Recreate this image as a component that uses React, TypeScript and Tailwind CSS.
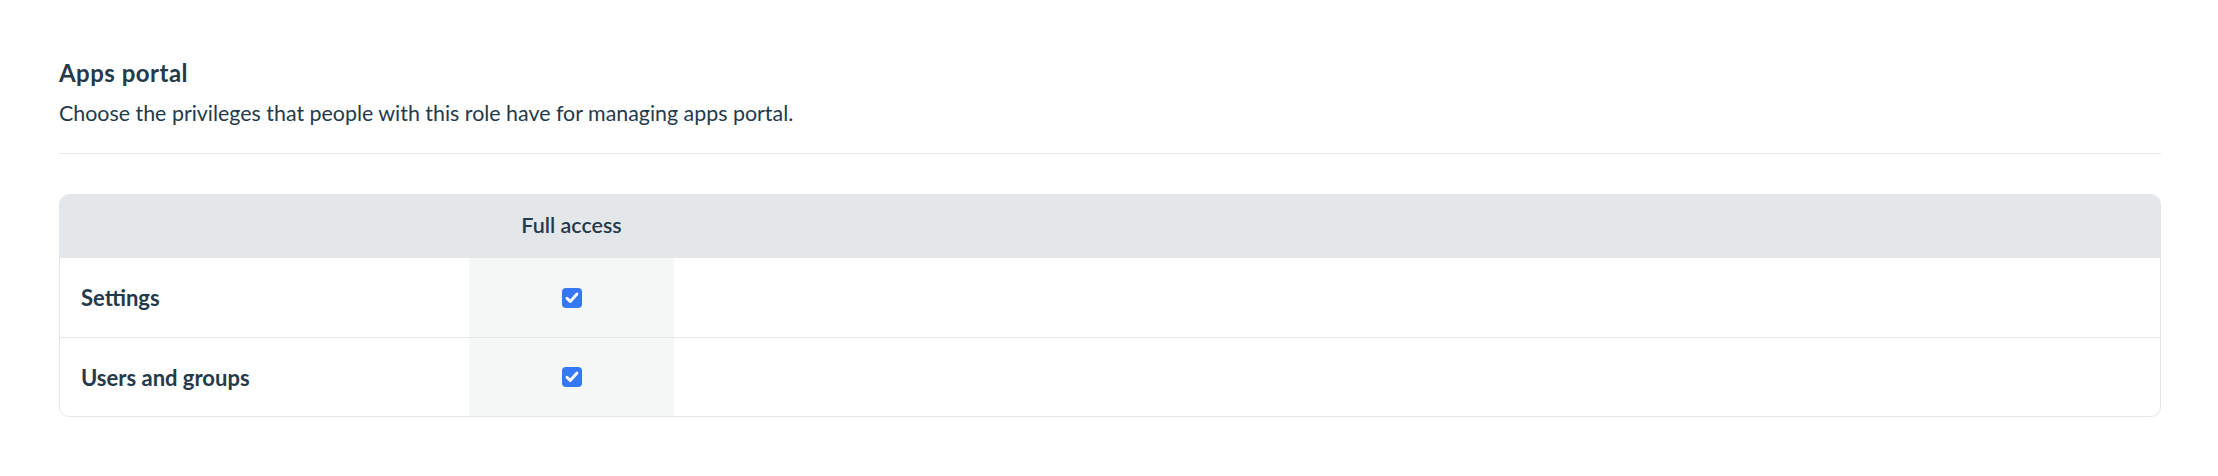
const rows = ["Settings", "Users and groups"];

function CheckIcon() {
  return (
    <span className="flex h-[20px] w-[20px] items-center justify-center rounded-[4px] bg-[#3478f6]">
      <svg width="20" height="20" viewBox="0 0 20 20" fill="none">
        <path
          d="M5 10.3 L8.2 13.5 L15 6"
          stroke="white"
          strokeWidth="2.9"
          strokeLinecap="round"
          strokeLinejoin="round"
        />
      </svg>
    </span>
  );
}

export default function App() {
  return (
    <div className="min-h-[476px] w-full bg-white pl-[59px] pr-[57px] pt-[58px] font-['Lato',sans-serif] text-[#243a4b]">
      {/* Section header */}
      <h2 className="text-[24px] font-bold leading-[30px] tracking-[0.02em]">Apps portal</h2>
      <p className="mt-[11px] text-[21.4px] leading-[28px]">
        Choose the privileges that people with this role have for managing apps portal.
      </p>
      <div className="mt-[26px] border-b border-[#e6e8ea]" />

      {/* Privileges table */}
      <div className="mt-[40px] overflow-hidden rounded-[10px] border border-[#e3e6e9]">
        <div className="grid h-[63px] grid-cols-[409px_205px_1fr] bg-[#e3e7ea]">
          <div />
          <div className="flex items-center justify-center pb-[3px] text-[21.5px] font-semibold">Full access</div>
          <div />
        </div>
        {rows.map((label, i) => (
          <div
            key={label}
            className={`grid h-[79px] grid-cols-[409px_205px_1fr] ${i > 0 ? "border-t border-[#e6e8ea]" : ""}`}
          >
            <div className="flex items-center pl-[21px] text-[22px] font-bold">{label}</div>
            <div className="flex items-center justify-center bg-[#f6f8f8]">
              <CheckIcon />
            </div>
            <div />
          </div>
        ))}
      </div>
    </div>
  );
}
